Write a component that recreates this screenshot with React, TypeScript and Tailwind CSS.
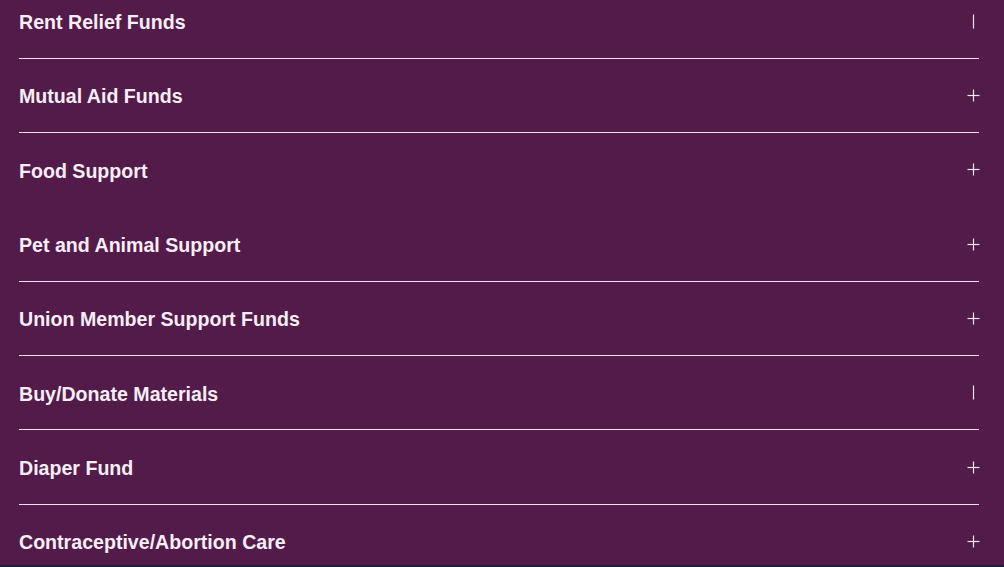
import React from "react";

const items: { label: string; open: boolean; line: boolean }[] = [
  { label: "Rent Relief Funds", open: true, line: true },
  { label: "Mutual Aid Funds", open: false, line: true },
  { label: "Food Support", open: false, line: false },
  { label: "Pet and Animal Support", open: false, line: true },
  { label: "Union Member Support Funds", open: false, line: true },
  { label: "Buy/Donate Materials", open: true, line: true },
  { label: "Diaper Fund", open: false, line: true },
  { label: "Contraceptive/Abortion Care", open: false, line: true },
];

function Icon({ open }: { open: boolean }) {
  return (
    <svg width="13" height="15" viewBox="0 0 13 15" className="shrink-0 -mr-[1px]">
      {open ? (
        <line x1="6.5" y1="0.5" x2="6.5" y2="14.5" stroke="#f6e8f2" strokeWidth="1.2" />
      ) : (
        <>
          <line x1="6.5" y1="1.5" x2="6.5" y2="13.5" stroke="#f6e8f2" strokeWidth="1.2" />
          <line x1="0.5" y1="7.5" x2="12.5" y2="7.5" stroke="#f6e8f2" strokeWidth="1.2" />
        </>
      )}
    </svg>
  );
}

export default function App() {
  return (
    <div className="w-[1004px] h-[567px] overflow-hidden bg-[#521b4a] flex flex-col">
      <div className="flex-1 overflow-hidden">
        <div className="-mt-[15.6px] pl-[19px] pr-[25px]" style={{ fontFamily: '"Liberation Sans", Arial, sans-serif' }}>
          {items.map((it) => (
            <div
              key={it.label}
              className={`h-[74.33px] flex items-center justify-between border-b ${
                it.line ? "border-[#f3e3ee]" : "border-transparent"
              }`}
            >
              <span className="mt-[3px] text-[19.6px] font-bold text-[#f8eef5]">{it.label}</span>
              <Icon open={it.open} />
            </div>
          ))}
        </div>
      </div>
      <div className="h-[2px] bg-[#1f1b3b]" />
    </div>
  );
}
